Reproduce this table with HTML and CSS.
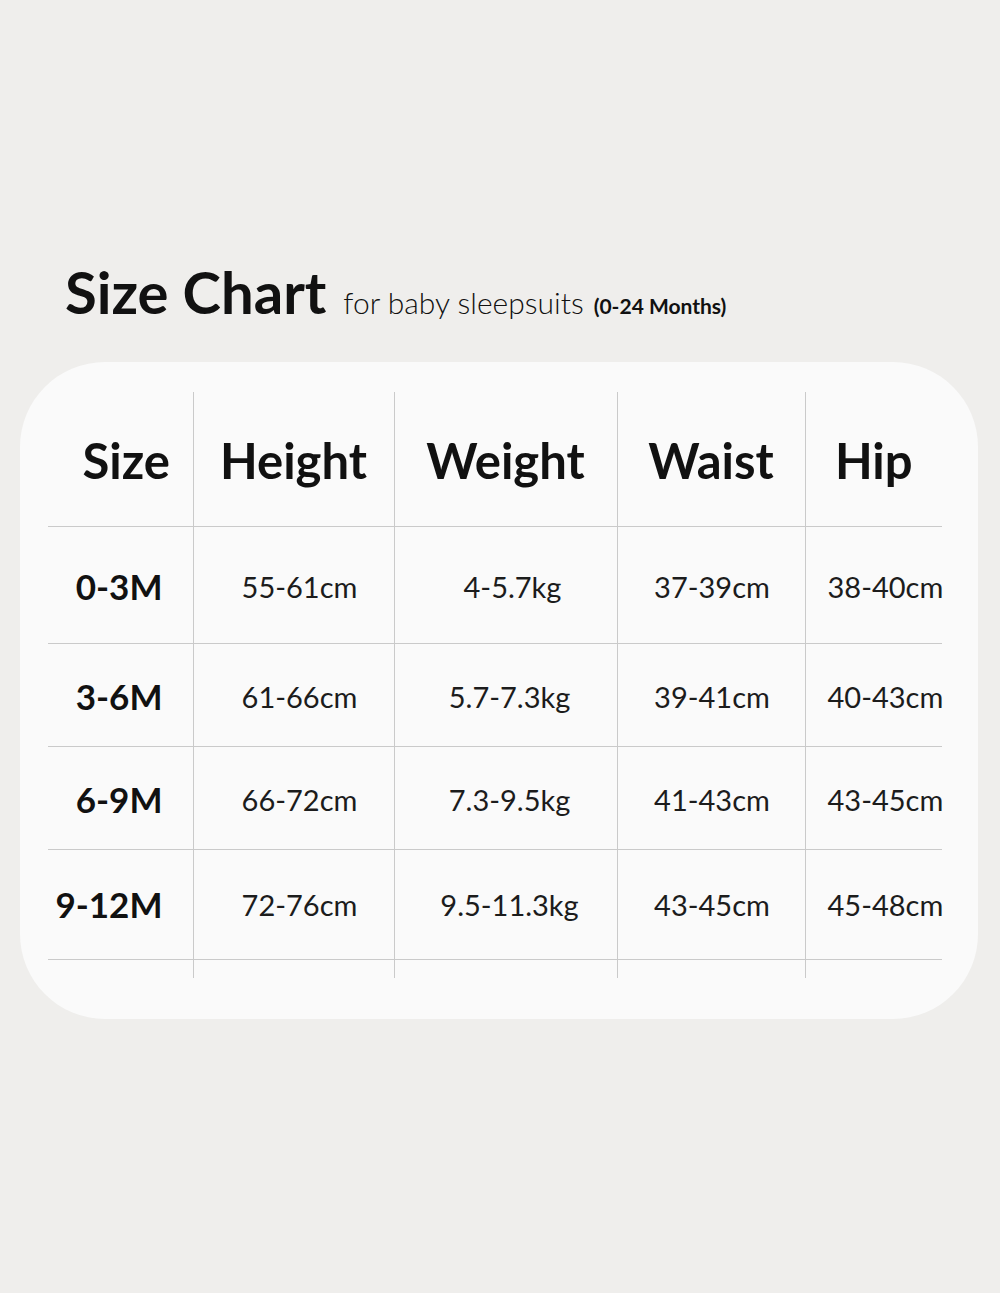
FILE: index.html
```html
<!DOCTYPE html>
<html lang="en">
<head>
<meta charset="utf-8">
<title>Size Chart</title>
<link rel="stylesheet" href="styles.css">
</head>
<body>
<div class="page">
  <div class="title-row">
    <h1 class="title">Size Chart</h1>
    <span class="subtitle">for baby sleepsuits</span>
    <span class="range">(0-24 Months)</span>
  </div>
  <div class="card">
    <table class="chart">
      <colgroup>
        <col class="c1"><col class="c2"><col class="c3"><col class="c4"><col class="c5">
      </colgroup>
      <thead>
        <tr class="head">
          <th class="h1">Size</th>
          <th class="h2">Height</th>
          <th class="h3">Weight</th>
          <th class="h4">Waist</th>
          <th class="h5">Hip</th>
        </tr>
      </thead>
      <tbody>
        <tr class="r1">
          <td class="lbl">0-3M</td><td class="d2">55-61cm</td><td class="d3 kg1">4-5.7kg</td><td class="d4">37-39cm</td><td class="d5">38-40cm</td>
        </tr>
        <tr class="r2">
          <td class="lbl">3-6M</td><td class="d2">61-66cm</td><td class="d3">5.7-7.3kg</td><td class="d4">39-41cm</td><td class="d5">40-43cm</td>
        </tr>
        <tr class="r3">
          <td class="lbl">6-9M</td><td class="d2">66-72cm</td><td class="d3">7.3-9.5kg</td><td class="d4">41-43cm</td><td class="d5">43-45cm</td>
        </tr>
        <tr class="r4">
          <td class="lbl">9-12M</td><td class="d2">72-76cm</td><td class="d3">9.5-11.3kg</td><td class="d4">43-45cm</td><td class="d5">45-48cm</td>
        </tr>
        <tr class="tail">
          <td></td><td></td><td></td><td></td><td></td>
        </tr>
      </tbody>
    </table>
  </div>
</div>
</body>
</html>
```

FILE: styles.css
```css
html, body {
  margin: 0;
  padding: 0;
  background: #efeeec;
}

body {
  font-family: Lato, "Open Sans", "Liberation Sans", sans-serif;
  color: #111;
}

.page {
  width: 1000px;
  height: 1293px;
  box-sizing: border-box;
  padding: 262px 22px 0 20px;
}

.title-row {
  display: flex;
  align-items: baseline;
  padding-left: 45px;
  height: 60px;
  line-height: 60px;
}

.title {
  margin: 0;
  font-size: 58px;
  font-weight: 700;
  color: #111;
  letter-spacing: 0;
}

.subtitle {
  margin-left: 17px;
  font-size: 30px;
  font-weight: 300;
  color: #111;
}

.range {
  margin-left: 10px;
  font-size: 21px;
  font-weight: 700;
  color: #111;
}

.card {
  margin-top: 40px;
  background: #fafafa;
  border-radius: 85px;
  height: 657px;
  box-sizing: border-box;
  padding: 30px 36px 0 28px;
}

.chart {
  border-collapse: collapse;
  table-layout: fixed;
  width: 894px;
}

.c1 { width: 145px; }
.c2 { width: 201px; }
.c3 { width: 223px; }
.c4 { width: 188px; }
.c5 { width: 137px; }

.chart th,
.chart td {
  padding: 0;
  text-align: center;
  vertical-align: middle;
  white-space: nowrap;
  border-bottom: 1px solid #cacaca;
}

.chart th + th,
.chart td + td {
  border-left: 1px solid #cacaca;
}

.head { height: 134px; }
.r1 { height: 117px; }
.r2 { height: 103px; }
.r3 { height: 103px; }
.r4 { height: 110px; }
.tail { height: 19px; }
.tail td { border-bottom: none; }

.chart th {
  font-size: 49px;
  font-weight: 700;
  color: #111;
  padding-top: 2px;
}

.chart .h1 { padding-left: 12px; }

.chart .lbl {
  font-size: 35px;
  font-weight: 700;
  color: #111;
  text-align: right;
  padding-right: 30px;
  padding-top: 3px;
}

.chart .d2,
.chart .d3,
.chart .d4,
.chart .d5 {
  font-size: 29px;
  font-weight: 400;
  color: #1c1c1c;
  padding-top: 4px;
}

.chart .r4 td { padding-top: 0; }

.chart .d2 { padding-left: 12px; }
.chart .d3 { padding-left: 8px; }
.chart .kg1 { padding-left: 14px; }
.chart .d4 { padding-left: 2px; }
.chart .d5 { padding-left: 22px; }
```
